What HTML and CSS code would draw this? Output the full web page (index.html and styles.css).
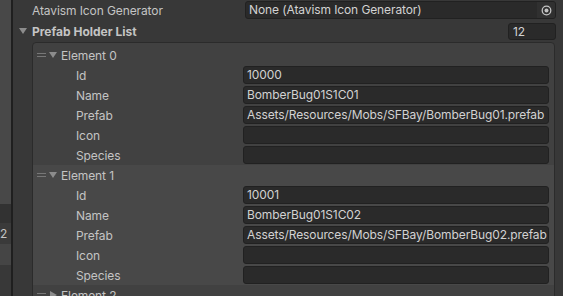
FILE: index.html
```html
<!DOCTYPE html>
<html lang="en">
<head>
    <meta charset="UTF-8">
    <title>Inspector</title>
    <link rel="stylesheet" href="styles.css">
</head>
<body>
<div class="window">
    <div class="side">
        <div class="side-top"></div>
        <div class="side-dark"></div>
        <div class="side-count">2</div>
        <div class="side-light"></div>
        <div class="side-rest"></div>
    </div>
    <div class="divider"></div>

    <div class="inspector">
        <div class="prop">
            <span class="label">Atavism Icon Generator</span>
            <div class="field object">
                <span>None (Atavism Icon Generator)</span>
                <span class="picker">
                    <svg width="11" height="11" viewBox="0 0 11 11"><circle cx="5.5" cy="5.5" r="4.3" fill="none" stroke="#c2c2c2" stroke-width="1.3"/><circle cx="5.5" cy="5.5" r="2" fill="#c2c2c2"/></svg>
                </span>
            </div>
        </div>

        <div class="prop list-head">
            <span class="fold open"></span>
            <span class="label bold">Prefab Holder List</span>
            <div class="field count">12</div>
        </div>

        <div class="list">
            <!-- Element 0 -->
            <div class="element">
                <div class="el-head"><span class="handle"></span><span class="fold open"></span>Element 0</div>
                <div class="row"><span class="label">Id</span><div class="field">10000</div></div>
                <div class="row"><span class="label">Name</span><div class="field">BomberBug01S1C01</div></div>
                <div class="row"><span class="label">Prefab</span><div class="field">Assets/Resources/Mobs/SFBay/BomberBug01.prefab</div></div>
                <div class="row"><span class="label">Icon</span><div class="field"></div></div>
                <div class="row"><span class="label">Species</span><div class="field"></div></div>
            </div>
            <!-- Element 1 -->
            <div class="element alt">
                <div class="el-head"><span class="handle"></span><span class="fold open"></span>Element 1</div>
                <div class="row"><span class="label">Id</span><div class="field">10001</div></div>
                <div class="row"><span class="label">Name</span><div class="field">BomberBug01S1C02</div></div>
                <div class="row"><span class="label">Prefab</span><div class="field">Assets/Resources/Mobs/SFBay/BomberBug02.prefab</div></div>
                <div class="row"><span class="label">Icon</span><div class="field"></div></div>
                <div class="row"><span class="label">Species</span><div class="field"></div></div>
            </div>
            <!-- Element 2 (collapsed) -->
            <div class="element">
                <div class="el-head"><span class="handle"></span><span class="fold closed"></span>Element 2</div>
            </div>
        </div>
    </div>
</div>
</body>
</html>
```

FILE: styles.css
```css
body {
    margin: 0;
    background-color: #383838;
    font-family: Inter, "Noto Sans", sans-serif;
    font-size: 12px;
    letter-spacing: -0.1px;
    color: #c4c4c4;
    overflow: hidden;
}

.window {
    display: flex;
    height: 296px;
}

/* left panel strip */
.side {
    width: 11px;
    display: flex;
    flex-direction: column;
    overflow: hidden;
}
.side-top { height: 204px; background-color: #484848; }
.side-dark { height: 19px; background-color: #323232; }
.side-count {
    height: 21px;
    background-color: #3a3a3a;
    line-height: 21px;
    text-align: right;
    padding-right: 5px;
    white-space: nowrap;
}
.side-light { height: 21px; background-color: #454545; }
.side-rest { flex: 1; background-color: #383838; }

.divider {
    width: 2px;
    background-color: #1f1f1f;
}

.inspector {
    flex: 1;
    min-width: 0;
}

.prop {
    display: flex;
    align-items: center;
    height: 20px;
    padding-left: 19px;
    padding-right: 7px;
}

.prop .label {
    flex: none;
    width: 213px;
}

.field {
    flex: 1;
    min-width: 0;
    height: 18px;
    box-sizing: border-box;
    background-color: #2a2a2a;
    border: 1px solid #212121;
    border-radius: 3px;
    padding-left: 3px;
    line-height: 16px;
    color: #d2d2d2;
    white-space: nowrap;
    overflow: hidden;
}

.object {
    display: flex;
    justify-content: space-between;
    padding-right: 0;
}

.picker {
    width: 18px;
    display: flex;
    align-items: center;
    justify-content: center;
    background-color: #303030;
}

.list-head {
    margin-top: 1px;
    padding-left: 6px;
}
.list-head .fold {
    margin-right: 5px;
}
.list-head .label {
    flex: 1;
    width: auto;
}
.bold {
    font-weight: 700;
    letter-spacing: 0;
}
.count {
    flex: none;
    width: 48px;
    height: 17px;
    padding-left: 4px;
}

.fold {
    display: inline-block;
    width: 0;
    height: 0;
    flex: none;
}
.fold.open {
    border-left: 4px solid transparent;
    border-right: 4px solid transparent;
    border-top: 6px solid #8c8c8c;
}
.fold.closed {
    border-top: 4px solid transparent;
    border-bottom: 4px solid transparent;
    border-left: 7px solid #8c8c8c;
    margin-left: 1px;
}

.list {
    margin: 1px 8px 0 19px;
    border: 1px solid #2b2b2b;
    border-radius: 4px;
    background-color: #414141;
    padding-top: 2px;
}

.element.alt {
    background-color: #484848;
}

.el-head {
    display: flex;
    align-items: center;
    height: 20px;
    padding-left: 4px;
}
.handle {
    width: 9px;
    height: 2px;
    border-top: 1px solid #777;
    border-bottom: 1px solid #777;
    margin-right: 3px;
}
.el-head .fold {
    margin-right: 4px;
}

.row {
    display: flex;
    align-items: center;
    height: 20px;
    padding-left: 43px;
    padding-right: 5px;
}
.row .label {
    flex: none;
    width: 167px;
}
```
